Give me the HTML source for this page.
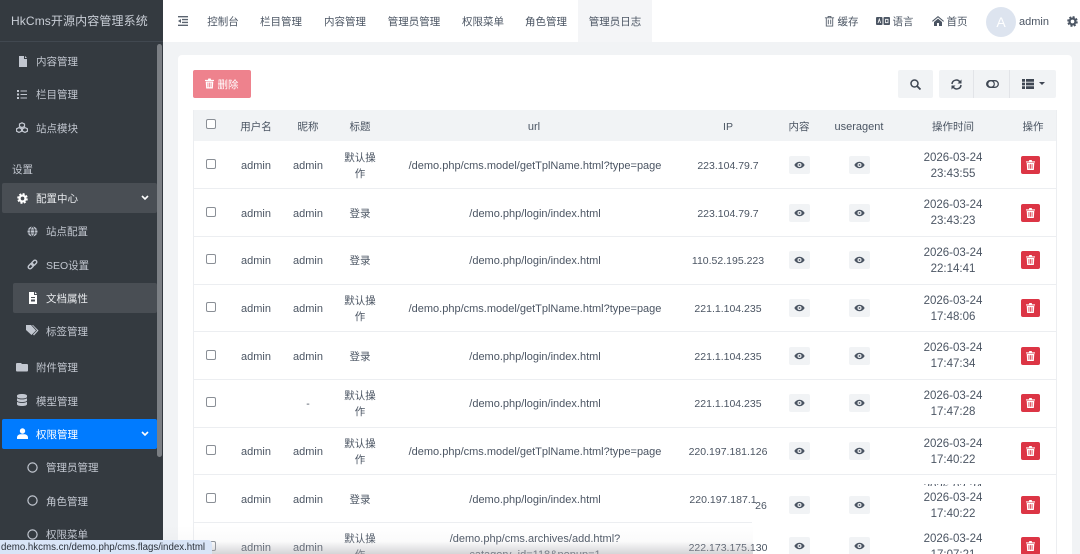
<!DOCTYPE html>
<html lang="zh"><head><meta charset="utf-8"><title>HkCms</title>
<style>
html,body{margin:0;padding:0;width:1080px;height:554px;overflow:hidden;background:#f1f3f5;font-family:"Liberation Sans","Noto Sans CJK SC",sans-serif;font-size:10.5px;color:#4b5563}
#wrap{position:absolute;left:0;top:0;width:1080px;height:554px;overflow:hidden;contain:paint}
.a{position:absolute;white-space:nowrap}
.c{position:absolute;white-space:nowrap;transform:translate(-50%,-50%);text-align:center;line-height:16px;margin-top:2px}
.l{font-size:11px}
.t{font-size:11.5px}
#side{position:absolute;left:0;top:0;width:163px;height:554px;background:#343a40;overflow:hidden}
.m{position:absolute;color:#c2c7d0;font-size:10.5px;line-height:14px;white-space:nowrap;transform:translateY(-50%);margin-top:.5px}
svg{position:absolute;display:block}
.cb{position:absolute;left:206px;width:10px;height:10px;border:1px solid #8a8f96;border-radius:2px;background:#fff;box-sizing:border-box}
.eye{position:absolute;width:21px;height:18px;background:#f1f3f5;border-radius:2px}
.del{position:absolute;left:1021px;width:19px;height:18px;background:#dc3545;border-radius:2px}
.line{position:absolute;left:193px;width:863px;height:1px;background:#eceef1}
</style></head><body>
<div id="wrap">
<svg width="0" height="0" style="position:absolute"><defs>
<symbol id="trash" viewBox="1 .5 10 11"><path fill="currentColor" fill-rule="evenodd" d="M1 2h3.200l.5-1.500h2.600L7.800 2H11v1.200H1zM1.800 3.800h8.400l-.5 7.700H2.300zM3.800 5v5.200h.9V5zm1.750 0v5.200h.9V5zM7.300 5v5.200h.9V5z"/></symbol>
<symbol id="eye" viewBox="0 0 12 12"><path fill="currentColor" fill-rule="evenodd" d="M6 2.500c2.600 0 4.700 1.700 5.600 3.500-.9 1.800-3 3.500-5.600 3.500S1.300 7.800.4 6C1.300 4.200 3.400 2.500 6 2.500zM6 3.800a2.200 2.200 0 1 0 0 4.400 2.200 2.200 0 0 0 0-4.400zM6 5a1 1 0 1 1 0 2 1 1 0 0 1 0-2z"/></symbol>
<symbol id="gear" viewBox="0 0 12 12"><circle cx="6" cy="6" r="3.200" fill="none" stroke="currentColor" stroke-width="2.400"/><circle cx="6" cy="6" r="4.900" fill="none" stroke="currentColor" stroke-width="1.800" stroke-dasharray="2.300 1.550"/></symbol>
</defs></svg>

<div id="side">
<div style="position:absolute;left:0;top:0;width:163px;height:42px;border-bottom:1px solid #414850;box-sizing:border-box"></div>
<div class="a" style="left:11px;top:13px;color:#c9ced6;font-size:12px;line-height:16px;letter-spacing:.12px">HkCms开源内容管理系统</div>
<div style="position:absolute;left:2px;top:183px;width:155px;height:30px;background:#494e54;border-radius:2px"></div>
<div style="position:absolute;left:13px;top:283px;width:144px;height:30px;background:#494e54;border-radius:2px"></div>
<div style="position:absolute;left:2px;top:419px;width:155px;height:30px;background:#007bff;border-radius:2px"></div>
<div style="position:absolute;left:157px;top:44px;width:5px;height:413px;background:#7b7f84;border-radius:3px"></div>

<svg style="left:18px;top:56px" width="10" height="11" viewBox="0 0 10 11"><path fill="#c2c7d0" d="M1 0h5v3h3v8H1zM7 0l2 2H7z"/></svg>
<div class="m" style="left:36px;top:61px">内容管理</div>
<svg style="left:16px;top:89px" width="12" height="11" viewBox="0 0 12 11"><path fill="#c2c7d0" d="M1 1h2v2H1zM1 4.500h2v2H1zM1 8h2v2H1zM4.500 1.500H11v1H4.500zM4.500 5H11v1H4.500zM4.500 8.500H11v1H4.500z"/></svg>
<div class="m" style="left:36px;top:94px">栏目管理</div>
<svg style="left:16px;top:122px" width="12" height="11" viewBox="0 0 12 11"><path fill="none" stroke="#c2c7d0" stroke-width="1.200" d="M6 .8l2.500 1.200v2.400L6 5.600 3.500 4.400V2zM3 5.600l2.500 1.200v2.400L3 10.400.6 9.200V6.800zM9 5.600l2.400 1.200v2.400L9 10.400 6.500 9.200V6.800z"/></svg>
<div class="m" style="left:36px;top:128px">站点模块</div>
<div class="m" style="left:12px;top:169px">设置</div>
<svg style="left:17px;top:193px;color:#fff" width="11" height="11" viewBox="0 0 12 12"><use href="#gear"/></svg>
<div class="m" style="left:36px;top:198px;color:#e8eaed">配置中心</div>
<svg style="left:141px;top:195px" width="8" height="6" viewBox="0 0 8 6"><path fill="none" stroke="#fff" stroke-width="1.600" d="M1 1l3 3 3-3"/></svg>
<svg style="left:27px;top:226px" width="11" height="11" viewBox="0 0 11 11"><circle cx="5.500" cy="5.500" r="5" fill="#c2c7d0"/><path fill="none" stroke="#343a40" stroke-width=".8" d="M.5 4h10M.5 7h10M5.500.5c-3 3-3 7 0 10M5.500.5c3 3 3 7 0 10"/></svg>
<div class="m" style="left:46px;top:231px">站点配置</div>
<svg style="left:27px;top:259px" width="11" height="11" viewBox="0 0 11 11"><g transform="rotate(-45 5.500 5.500)" fill="none" stroke="#c2c7d0" stroke-width="1.400"><rect x=".2" y="3.700" width="6" height="3.600" rx="1.800"/><rect x="4.800" y="3.700" width="6" height="3.600" rx="1.800"/></g></svg>
<div class="m" style="left:46px;top:265px">SEO设置</div>
<svg style="left:28px;top:292px" width="10" height="12" viewBox="0 0 10 12"><path fill="#fff" fill-rule="evenodd" d="M1 0h5v3h3v9H1zM7 0l2 2H7zM3 5v1h4V5zM3 7.500v2h4v-2z"/></svg>
<div class="m" style="left:46px;top:298px;color:#e8eaed">文档属性</div>
<svg style="left:26px;top:325px" width="13" height="11" viewBox="0 0 13 11"><path fill="#c2c7d0" d="M0 0h5l5 5.500-4.500 4.500L0 5zM7 0l5.500 5.500L8 10.500l-1-1 4-4L6 0z"/></svg>
<div class="m" style="left:46px;top:331px">标签管理</div>
<svg style="left:16px;top:362px" width="12" height="10" viewBox="0 0 12 10"><path fill="#c2c7d0" d="M1 1h4l1 1h5a1 1 0 0 1 1 1v5.500a1 1 0 0 1-1 1H1a1 1 0 0 1-1-1V2a1 1 0 0 1 1-1z"/></svg>
<div class="m" style="left:36px;top:367px">附件管理</div>
<svg style="left:17px;top:394px" width="10" height="12" viewBox="0 0 10 12"><path fill="#c2c7d0" d="M5 0c3 0 5 .7 5 1.800v.9C10 3.800 8 4.500 5 4.500S0 3.800 0 2.700v-.9C0 .7 2 0 5 0zM0 4.200C1 5 3 5.400 5 5.400s4-.4 5-1.200v2C10 7.300 8 8 5 8S0 7.300 0 6.200zM0 7.700C1 8.500 3 8.900 5 8.900s4-.4 5-1.200v2.500C10 11.300 8 12 5 12s-5-.7-5-1.800z"/></svg>
<div class="m" style="left:36px;top:401px">模型管理</div>
<svg style="left:17px;top:428px" width="11" height="11" viewBox="0 0 11 11"><circle cx="5.500" cy="3" r="2.700" fill="#fff"/><path fill="#fff" d="M0 9.500C0 7.500 2 6.300 3.500 6.300h4C9 6.300 11 7.500 11 9.500V11H0z"/></svg>
<div class="m" style="left:36px;top:434px;color:#fff">权限管理</div>
<svg style="left:141px;top:431px" width="8" height="6" viewBox="0 0 8 6"><path fill="none" stroke="#fff" stroke-width="1.600" d="M1 1l3 3 3-3"/></svg>
<svg style="left:27px;top:462px" width="11" height="11" viewBox="0 0 11 11"><circle cx="5.500" cy="5.500" r="4.600" fill="none" stroke="#c2c7d0" stroke-width="1.200"/></svg>
<div class="m" style="left:46px;top:467px">管理员管理</div>
<svg style="left:27px;top:495px" width="11" height="11" viewBox="0 0 11 11"><circle cx="5.500" cy="5.500" r="4.600" fill="none" stroke="#c2c7d0" stroke-width="1.200"/></svg>
<div class="m" style="left:46px;top:501px">角色管理</div>
<svg style="left:27px;top:529px" width="11" height="11" viewBox="0 0 11 11"><circle cx="5.500" cy="5.500" r="4.600" fill="none" stroke="#c2c7d0" stroke-width="1.200"/></svg>
<div class="m" style="left:46px;top:534px">权限菜单</div>
</div>

<div style="position:absolute;left:163px;top:0;width:917px;height:42px;background:#fff"></div>
<div style="position:absolute;left:578px;top:0;width:74px;height:42px;background:#f4f5f7"></div>
<svg style="left:178px;top:16px" width="10" height="10" viewBox="0 0 10 10"><path fill="#5b6470" d="M0 0h10v1.400H0zM4 2.900h6v1.300H4zM4 5.800h6v1.300H4zM0 8.600h10V10H0zM3 3v4L0 5z"/></svg>
<div class="c" style="left:223px;top:20px">控制台</div>
<div class="c" style="left:281px;top:20px">栏目管理</div>
<div class="c" style="left:345px;top:20px">内容管理</div>
<div class="c" style="left:414px;top:20px">管理员管理</div>
<div class="c" style="left:483px;top:20px">权限菜单</div>
<div class="c" style="left:546px;top:20px">角色管理</div>
<div class="c" style="left:615px;top:20px">管理员日志</div>

<svg style="left:824px;top:15px;color:#5b6470" width="11" height="12" viewBox="0 0 12 12"><path fill="none" stroke="currentColor" d="M1 2.500h10M4.500 2.500V1h3v1.500M2.500 2.500v9h7v-9M4.700 4.500v5M7.300 4.500v5"/></svg>
<div class="c" style="left:848px;top:20px">缓存</div>
<svg style="left:876px;top:17px" width="14" height="8" viewBox="0 0 14 8"><rect width="6.500" height="8" rx="1" fill="#4b5563"/><rect x="7.500" width="6.500" height="8" rx="1" fill="#4b5563"/><path stroke="#fff" fill="none" stroke-width=".8" d="M2 6l1.300-4L4.600 6M9.500 2.300h2.500v3.400H9.500z"/></svg>
<div class="c" style="left:903px;top:20px">语言</div>
<svg style="left:932px;top:16px" width="12" height="10" viewBox="0 0 12 10"><path fill="#4b5563" d="M6 0l6 5-.7.800L6 1.400.7 5.800 0 5zM2 6l4-3.400L10 6v4H7V7H5v3H2z"/></svg>
<div class="c" style="left:957px;top:20px">首页</div>
<div style="position:absolute;left:986px;top:7px;width:30px;height:30px;border-radius:50%;background:#dde4ef"></div>
<div class="c" style="left:1001px;top:20px;color:#fff;font-size:14px">A</div>
<div class="c l" style="left:1034px;top:20px">admin</div>
<svg style="left:1067px;top:16px;color:#4b5563" width="11" height="11" viewBox="0 0 12 12"><use href="#gear"/></svg>

<div style="position:absolute;left:178px;top:55px;width:894px;height:499px;background:#fff;border-radius:4px 4px 0 0"></div>
<div style="position:absolute;left:193px;top:70px;width:58px;height:28px;background:#ee828d;border-radius:2px"></div>
<svg style="left:205px;top:78px;color:#fff" width="9" height="11" viewBox="0 0 9 11"><use href="#trash" width="9" height="11"/></svg>
<div class="c" style="left:228px;top:83px;color:#fff">删除</div>

<div style="position:absolute;left:898px;top:70px;width:35px;height:28px;background:#f1f3f5;border-radius:2px"></div>
<svg style="left:910px;top:79px" width="11" height="11" viewBox="0 0 11 11"><circle cx="4.500" cy="4.500" r="3.500" fill="none" stroke="#3f4753" stroke-width="1.500"/><path stroke="#3f4753" stroke-width="1.800" d="M7 7l3.500 3.500"/></svg>
<div style="position:absolute;left:939px;top:70px;width:117px;height:28px;background:#f1f3f5;border-radius:2px"></div>
<div style="position:absolute;left:973px;top:70px;width:1px;height:28px;background:#e2e4e8"></div>
<div style="position:absolute;left:1009px;top:70px;width:1px;height:28px;background:#e2e4e8"></div>
<svg style="left:951px;top:79px" width="11" height="11" viewBox="0 0 11 11"><path fill="none" stroke="#3f4753" stroke-width="1.500" d="M1 5a4.300 4.300 0 0 1 8-1.800M10 6a4.300 4.300 0 0 1-8 1.800"/><path fill="#3f4753" d="M10.500.5v4h-4zM.5 10.500v-4h4z"/></svg>
<svg style="left:986px;top:79px" width="13" height="10" viewBox="0 0 13 10"><rect x=".7" y="1.700" width="11.600" height="6.600" rx="3.300" fill="none" stroke="#3f4753" stroke-width="1.300"/><circle cx="5" cy="5" r="3.300" fill="none" stroke="#3f4753" stroke-width="1.200"/></svg>
<svg style="left:1022px;top:79px" width="12" height="10" viewBox="0 0 12 10"><path fill="#3f4753" d="M0 0h3v2.800H0zM4 0h8v2.800H4zM0 3.600h3v2.800H0zM4 3.600h8v2.800H4zM0 7.200h3V10H0zM4 7.200h8V10H4z"/></svg>
<svg style="left:1039px;top:82px" width="6" height="3" viewBox="0 0 6 3"><path fill="#3f4753" d="M0 0h6L3 3z"/></svg>

<div style="position:absolute;left:193px;top:110px;width:863px;height:31px;background:#f1f3f5"></div>
<div style="position:absolute;left:193px;top:110px;width:1px;height:444px;background:#eceef1"></div>
<div style="position:absolute;left:1056px;top:110px;width:1px;height:444px;background:#eceef1"></div>
<div class="cb" style="top:119px"></div>
<div class="c" style="left:256px;top:125px">用户名</div>
<div class="c" style="left:308px;top:125px">昵称</div>
<div class="c" style="left:360px;top:125px">标题</div>
<div class="c l" style="left:534px;top:125px">url</div>
<div class="c" style="left:728px;top:125px">IP</div>
<div class="c" style="left:799px;top:125px">内容</div>
<div class="c l" style="left:859px;top:125px">useragent</div>
<div class="c" style="left:953px;top:125px">操作时间</div>
<div class="c" style="left:1033px;top:125px">操作</div>

<div class="line" style="top:188px"></div><div class="line" style="top:236px"></div><div class="line" style="top:284px"></div><div class="line" style="top:331px"></div><div class="line" style="top:379px"></div><div class="line" style="top:427px"></div><div class="line" style="top:474px"></div><div class="line" style="top:522px;width:559px"></div>

<!-- row 1 -->
<div class="cb" style="top:159px"></div><div class="c l" style="left:256px;top:164px">admin</div><div class="c l" style="left:308px;top:164px">admin</div><div class="c" style="left:360px;top:164px">默认操<br>作</div><div class="c l" style="left:535px;top:164px">/demo.php/cms.model/getTplName.html?type=page</div><div class="c" style="left:728px;top:164px">223.104.79.7</div><div class="c t" style="left:953px;top:164px">2026-03-24<br>23:43:55</div>
<!-- row 2 -->
<div class="cb" style="top:207px"></div><div class="c l" style="left:256px;top:212px">admin</div><div class="c l" style="left:308px;top:212px">admin</div><div class="c" style="left:360px;top:212px">登录</div><div class="c l" style="left:535px;top:212px">/demo.php/login/index.html</div><div class="c" style="left:728px;top:212px">223.104.79.7</div><div class="c t" style="left:953px;top:211px">2026-03-24<br>23:43:23</div>
<!-- row 3 -->
<div class="cb" style="top:254px"></div><div class="c l" style="left:256px;top:259px">admin</div><div class="c l" style="left:308px;top:259px">admin</div><div class="c" style="left:360px;top:259px">登录</div><div class="c l" style="left:535px;top:259px">/demo.php/login/index.html</div><div class="c" style="left:728px;top:259px">110.52.195.223</div><div class="c t" style="left:953px;top:259px">2026-03-24<br>22:14:41</div>
<!-- row 4 -->
<div class="cb" style="top:302px"></div><div class="c l" style="left:256px;top:307px">admin</div><div class="c l" style="left:308px;top:307px">admin</div><div class="c" style="left:360px;top:307px">默认操<br>作</div><div class="c l" style="left:535px;top:307px">/demo.php/cms.model/getTplName.html?type=page</div><div class="c" style="left:728px;top:307px">221.1.104.235</div><div class="c t" style="left:953px;top:307px">2026-03-24<br>17:48:06</div>
<!-- row 5 -->
<div class="cb" style="top:350px"></div><div class="c l" style="left:256px;top:355px">admin</div><div class="c l" style="left:308px;top:355px">admin</div><div class="c" style="left:360px;top:355px">登录</div><div class="c l" style="left:535px;top:355px">/demo.php/login/index.html</div><div class="c" style="left:728px;top:355px">221.1.104.235</div><div class="c t" style="left:953px;top:354px">2026-03-24<br>17:47:34</div>
<!-- row 6 -->
<div class="cb" style="top:397px"></div><div class="c" style="left:308px;top:402px">-</div><div class="c" style="left:360px;top:402px">默认操<br>作</div><div class="c l" style="left:535px;top:402px">/demo.php/login/index.html</div><div class="c" style="left:728px;top:402px">221.1.104.235</div><div class="c t" style="left:953px;top:402px">2026-03-24<br>17:47:28</div>
<!-- row 7 -->
<div class="cb" style="top:445px"></div><div class="c l" style="left:256px;top:450px">admin</div><div class="c l" style="left:308px;top:450px">admin</div><div class="c" style="left:360px;top:450px">默认操<br>作</div><div class="c l" style="left:535px;top:450px">/demo.php/cms.model/getTplName.html?type=page</div><div class="c" style="left:728px;top:450px">220.197.181.126</div><div class="c t" style="left:953px;top:450px">2026-03-24<br>17:40:22</div>
<!-- row 8 -->
<div class="cb" style="top:493px"></div><div class="c l" style="left:256px;top:498px">admin</div><div class="c l" style="left:308px;top:498px">admin</div><div class="c" style="left:360px;top:498px">登录</div><div class="c l" style="left:535px;top:498px">/demo.php/login/index.html</div><div class="c" style="left:723px;top:498px">220.197.187.1</div><div class="c" style="left:761px;top:504px">26</div>
<div style="position:absolute;left:920px;top:484px;width:66px;height:2px;overflow:hidden"><div class="c t" style="left:33px;top:2px">2026-03-24</div></div>
<div class="c t" style="left:953px;top:504px">2026-03-24<br>17:40:22</div>
<!-- row 9 -->
<div class="cb" style="top:541px"></div><div class="c l" style="left:256px;top:546px">admin</div><div class="c l" style="left:308px;top:546px">admin</div><div class="c" style="left:360px;top:545px">默认操<br>作</div><div class="c l" style="left:535px;top:545px">/demo.php/cms.archives/add.html?<br>catagory_id=118&amp;popup=1</div><div class="c" style="left:728px;top:546px">222.173.175.130</div><div class="c t" style="left:953px;top:545px">2026-03-24<br>17:07:21</div>

<div class="eye" style="left:789px;top:156px"></div><div class="eye" style="left:849px;top:156px"></div><div class="del" style="top:156px"></div>
<div class="eye" style="left:789px;top:204px"></div><div class="eye" style="left:849px;top:204px"></div><div class="del" style="top:204px"></div>
<div class="eye" style="left:789px;top:251px"></div><div class="eye" style="left:849px;top:251px"></div><div class="del" style="top:251px"></div>
<div class="eye" style="left:789px;top:299px"></div><div class="eye" style="left:849px;top:299px"></div><div class="del" style="top:299px"></div>
<div class="eye" style="left:789px;top:347px"></div><div class="eye" style="left:849px;top:347px"></div><div class="del" style="top:347px"></div>
<div class="eye" style="left:789px;top:394px"></div><div class="eye" style="left:849px;top:394px"></div><div class="del" style="top:394px"></div>
<div class="eye" style="left:789px;top:442px"></div><div class="eye" style="left:849px;top:442px"></div><div class="del" style="top:442px"></div>
<div class="eye" style="left:789px;top:496px"></div><div class="eye" style="left:849px;top:496px"></div><div class="del" style="top:496px"></div>
<div class="eye" style="left:789px;top:537px"></div><div class="eye" style="left:849px;top:537px"></div><div class="del" style="top:537px"></div>

<svg style="left:794px;top:159px;color:#4b5563" width="11" height="12"><use href="#eye" width="11" height="12"/></svg><svg style="left:854px;top:159px;color:#4b5563" width="11" height="12"><use href="#eye" width="11" height="12"/></svg><svg style="left:1026px;top:160px;color:#fff" width="9" height="10"><use href="#trash" width="9" height="10"/></svg>
<svg style="left:794px;top:207px;color:#4b5563" width="11" height="12"><use href="#eye" width="11" height="12"/></svg><svg style="left:854px;top:207px;color:#4b5563" width="11" height="12"><use href="#eye" width="11" height="12"/></svg><svg style="left:1026px;top:208px;color:#fff" width="9" height="10"><use href="#trash" width="9" height="10"/></svg>
<svg style="left:794px;top:254px;color:#4b5563" width="11" height="12"><use href="#eye" width="11" height="12"/></svg><svg style="left:854px;top:254px;color:#4b5563" width="11" height="12"><use href="#eye" width="11" height="12"/></svg><svg style="left:1026px;top:255px;color:#fff" width="9" height="10"><use href="#trash" width="9" height="10"/></svg>
<svg style="left:794px;top:302px;color:#4b5563" width="11" height="12"><use href="#eye" width="11" height="12"/></svg><svg style="left:854px;top:302px;color:#4b5563" width="11" height="12"><use href="#eye" width="11" height="12"/></svg><svg style="left:1026px;top:303px;color:#fff" width="9" height="10"><use href="#trash" width="9" height="10"/></svg>
<svg style="left:794px;top:350px;color:#4b5563" width="11" height="12"><use href="#eye" width="11" height="12"/></svg><svg style="left:854px;top:350px;color:#4b5563" width="11" height="12"><use href="#eye" width="11" height="12"/></svg><svg style="left:1026px;top:351px;color:#fff" width="9" height="10"><use href="#trash" width="9" height="10"/></svg>
<svg style="left:794px;top:397px;color:#4b5563" width="11" height="12"><use href="#eye" width="11" height="12"/></svg><svg style="left:854px;top:397px;color:#4b5563" width="11" height="12"><use href="#eye" width="11" height="12"/></svg><svg style="left:1026px;top:398px;color:#fff" width="9" height="10"><use href="#trash" width="9" height="10"/></svg>
<svg style="left:794px;top:445px;color:#4b5563" width="11" height="12"><use href="#eye" width="11" height="12"/></svg><svg style="left:854px;top:445px;color:#4b5563" width="11" height="12"><use href="#eye" width="11" height="12"/></svg><svg style="left:1026px;top:446px;color:#fff" width="9" height="10"><use href="#trash" width="9" height="10"/></svg>
<svg style="left:794px;top:499px;color:#4b5563" width="11" height="12"><use href="#eye" width="11" height="12"/></svg><svg style="left:854px;top:499px;color:#4b5563" width="11" height="12"><use href="#eye" width="11" height="12"/></svg><svg style="left:1026px;top:500px;color:#fff" width="9" height="10"><use href="#trash" width="9" height="10"/></svg>
<svg style="left:794px;top:540px;color:#4b5563" width="11" height="12"><use href="#eye" width="11" height="12"/></svg><svg style="left:854px;top:540px;color:#4b5563" width="11" height="12"><use href="#eye" width="11" height="12"/></svg><svg style="left:1026px;top:541px;color:#fff" width="9" height="10"><use href="#trash" width="9" height="10"/></svg>

<div style="position:absolute;left:163px;top:526px;width:590px;height:28px;background:linear-gradient(to bottom,rgba(200,200,205,0) 0%,rgba(200,200,205,.08) 55%,rgba(170,170,175,.5) 100%)"></div>
<div style="position:absolute;left:0;top:540px;width:212px;height:14px;background:#d9e5f7;border-top-right-radius:4px"></div>
<div class="a" style="left:1px;top:541px;font-size:9.700px;line-height:13px;color:#2a3038">demo.hkcms.cn/demo.php/cms.flags/index.html</div>
</div>
</body></html>
